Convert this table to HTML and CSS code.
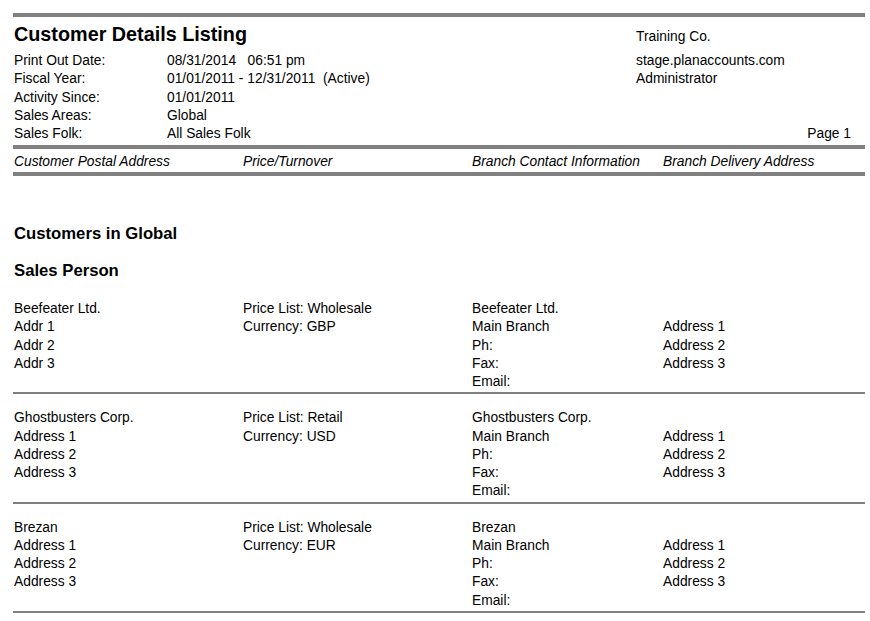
FILE: index.html
```html
<!DOCTYPE html>
<html>
<head>
<meta charset="utf-8">
<link rel="stylesheet" href="styles.css">
</head>
<body>
<div class="page">
  <div class="rule thick"></div>
  <header class="head">
    <div class="head-left">
      <h1 class="title">Customer Details Listing</h1>
      <div class="info">
        <div class="label">Print Out Date:</div><div class="value">08/31/2014&nbsp;&nbsp;&nbsp;06:51 pm</div>
        <div class="label">Fiscal Year:</div><div class="value">01/01/2011 - 12/31/2011&nbsp;&nbsp;(Active)</div>
        <div class="label">Activity Since:</div><div class="value">01/01/2011</div>
        <div class="label">Sales Areas:</div><div class="value">Global</div>
        <div class="label">Sales Folk:</div><div class="value">All Sales Folk</div>
      </div>
    </div>
    <div class="head-right">
      <div class="company">Training Co.</div>
      <div class="line">stage.planaccounts.com</div>
      <div class="line">Administrator</div>
      <div class="pageno">Page 1</div>
    </div>
  </header>
  <div class="rule thick"></div>
  <div class="cols colhead">
    <div>Customer Postal Address</div>
    <div>Price/Turnover</div>
    <div>Branch Contact Information</div>
    <div>Branch Delivery Address</div>
  </div>
  <div class="rule thick"></div>

  <h2 class="section first">Customers in Global</h2>
  <h2 class="section">Sales Person</h2>

  <div class="record cols">
    <div>Beefeater Ltd.<br>Addr 1<br>Addr 2<br>Addr 3</div>
    <div>Price List: Wholesale<br>Currency: GBP</div>
    <div>Beefeater Ltd.<br>Main Branch<br>Ph:<br>Fax:<br>Email:</div>
    <div><br>Address 1<br>Address 2<br>Address 3</div>
  </div>
  <div class="record cols">
    <div>Ghostbusters Corp.<br>Address 1<br>Address 2<br>Address 3</div>
    <div>Price List: Retail<br>Currency: USD</div>
    <div>Ghostbusters Corp.<br>Main Branch<br>Ph:<br>Fax:<br>Email:</div>
    <div><br>Address 1<br>Address 2<br>Address 3</div>
  </div>
  <div class="record cols">
    <div>Brezan<br>Address 1<br>Address 2<br>Address 3</div>
    <div>Price List: Wholesale<br>Currency: EUR</div>
    <div>Brezan<br>Main Branch<br>Ph:<br>Fax:<br>Email:</div>
    <div><br>Address 1<br>Address 2<br>Address 3</div>
  </div>
</div>
</body>
</html>
```

FILE: styles.css
```css
html, body {
  margin: 0;
  padding: 0;
  background: #ffffff;
}
body {
  font-family: "Liberation Sans", Arial, sans-serif;
  font-size: 13.8px;
  color: #000000;
}
.page {
  width: 852px;
  margin-left: 13px;
  padding-top: 13px;
}
.rule.thick {
  height: 4px;
  background: #808080;
}
.head {
  display: flex;
  justify-content: space-between;
  height: 128px;
}
.head-left {
  padding-left: 1px;
}
.title {
  margin: 4px 0 0 0;
  font-size: 19.8px;
  font-weight: bold;
  line-height: 26px;
}
.info {
  margin-top: 5px;
  display: grid;
  grid-template-columns: 153px auto;
  line-height: 18.25px;
}
.head-right {
  width: 229px;
  display: flex;
  flex-direction: column;
  line-height: 18.25px;
}
.company {
  margin-top: 11px;
  margin-bottom: 5.75px;
}
.pageno {
  margin-top: auto;
  margin-bottom: 2px;
  text-align: right;
  padding-right: 14px;
}
.cols {
  display: grid;
  grid-template-columns: 229px 229px 191px 1fr;
  padding-left: 1px;
}
.colhead {
  font-style: italic;
  line-height: 21px;
  padding-top: 2px;
}
.section {
  margin: 0;
  font-size: 16.7px;
  font-weight: bold;
  line-height: 18px;
  padding-left: 1px;
}
.section.first {
  margin-top: 49px;
}
.section + .section {
  margin-top: 19px;
}
.record {
  line-height: 18.25px;
  padding-top: 15px;
  padding-bottom: 1px;
  border-bottom: 2px solid #808080;
}
.section + .record {
  padding-top: 20px;
}
```
